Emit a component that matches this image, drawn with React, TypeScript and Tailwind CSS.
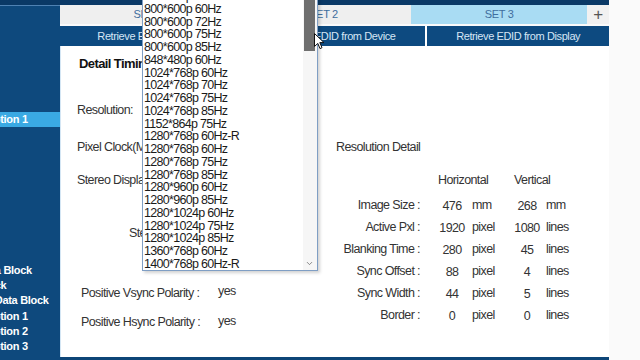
import { ChevronDown } from 'lucide-react'

const modes = [
  '800*600p 56Hz',
  '800*600p 60Hz',
  '800*600p 72Hz',
  '800*600p 75Hz',
  '800*600p 85Hz',
  '848*480p 60Hz',
  '1024*768p 60Hz',
  '1024*768p 70Hz',
  '1024*768p 75Hz',
  '1024*768p 85Hz',
  '1152*864p 75Hz',
  '1280*768p 60Hz-R',
  '1280*768p 60Hz',
  '1280*768p 75Hz',
  '1280*768p 85Hz',
  '1280*960p 60Hz',
  '1280*960p 85Hz',
  '1280*1024p 60Hz',
  '1280*1024p 75Hz',
  '1280*1024p 85Hz',
  '1360*768p 60Hz',
  '1400*768p 60Hz-R',
]

// sidebar is scrolled sideways, so only the tail of long names shows
const navItems = [
  'EDID Header',
  'Vendor/Product ID',
  'EDID Version',
  'Basic Parameters',
  'Color Characteristics',
  'Established Timings',
  'Standard Timings',
  'Detailed Timing Description 1',
  'Monitor Name',
  'Monitor Range Limits',
  'Serial Number',
  'CEA-861 Extension',
  'General Info',
  'Video Data Block',
  'Audio Data Block',
  'Vendor Block',
  'HDR Static Block',
  'Speaker Allocation Data Block',
  'Extended Tag Data Block',
  'Vendor Specific Audio Data Block',
  'Detailed Timing Description 1',
  'Detailed Timing Description 2',
  'Detailed Timing Description 3',
]

const detailRows = [
  { label: 'Image Size :', h: '476', hu: 'mm', v: '268', vu: 'mm' },
  { label: 'Active Pxl :', h: '1920', hu: 'pixel', v: '1080', vu: 'lines' },
  { label: 'Blanking Time :', h: '280', hu: 'pixel', v: '45', vu: 'lines' },
  { label: 'Sync Offset :', h: '88', hu: 'pixel', v: '4', vu: 'lines' },
  { label: 'Sync Width :', h: '44', hu: 'pixel', v: '5', vu: 'lines' },
  { label: 'Border :', h: '0', hu: 'pixel', v: '0', vu: 'lines' },
]

function Sidebar() {
  return (
    <div className="w-[60px] h-full flex flex-col bg-[#0e497d] overflow-hidden">
      <div className="h-[5px] bg-[#0a3966] shrink-0" />
      <div className="h-px bg-[#4f82b3] shrink-0" />
      <div className="-ml-[118px] text-[11px] font-bold tracking-[-0.3px] text-white">
        {navItems.map((name, i) => (
          <div
            key={i}
            className={`h-[15.13px] leading-[15.13px] whitespace-nowrap ${i === 7 ? 'bg-[#3aa9e3]' : ''}`}
          >
            {name}
          </div>
        ))}
      </div>
    </div>
  )
}

function ModeList() {
  return (
    <div className="absolute left-[142px] top-[-11px] w-[176px] h-[282px] bg-white border border-[#7f9ec4] shadow-[2px_2px_3px_rgba(0,0,0,0.18)] flex">
      <div className="flex-1 h-[280px] overflow-hidden text-[12.5px] tracking-[-0.7px] text-[#1a1a1a]">
        {modes.map((m) => (
          <div key={m} className="h-[12.75px] leading-[12.75px] pl-px whitespace-nowrap">{m}</div>
        ))}
      </div>
      <div className="w-[14px] h-full bg-[#f6f6f6] flex flex-col items-center pr-[2px]">
        <div className="w-[11px] h-[61px] bg-[#6f6f6f]" />
        <div className="flex-1" />
        <ChevronDown size={9} strokeWidth={2} className="text-[#666] mb-[2px]" />
      </div>
    </div>
  )
}

function Cursor() {
  return (
    <svg className="absolute left-[314px] top-[33px]" width="11" height="17" viewBox="0 0 11 17">
      <path d="M0.5 0.5 L0.5 13.5 L3.8 10.4 L6 15.6 L8 14.7 L5.8 9.6 L10 9.6 Z" fill="#fff" stroke="#111" strokeWidth="1" />
    </svg>
  )
}

function Main() {
  return (
    <div className="w-[549px] h-full flex flex-col">
      <div className="h-[5px] bg-[#0a3966] shrink-0" />
      <div className="h-[19px] flex text-[11px] tracking-[-0.3px] text-[#3f6e9e] shrink-0">
        <div className="flex-1 bg-[#efefef] flex items-center justify-center">SET 1</div>
        <div className="flex-1 bg-[#efefef] flex items-center justify-center">SET 2</div>
        <div className="flex-1 bg-[#a9dcf3] flex items-center justify-center">SET 3</div>
        <div className="w-[22px] bg-[#f1f1f1] flex items-center justify-center text-[17px] font-light text-[#555]">+</div>
      </div>
      <div className="h-[20px] mt-[2px] flex gap-[2px] bg-white text-[11px] tracking-[-0.4px] text-[#d6e6f5] shrink-0">
        <div className="flex-1 bg-[#0d4a80] flex items-center justify-center">Retrieve EDID from File</div>
        <div className="flex-1 bg-[#0d4a80] flex items-center justify-center">Retrieve EDID from Device</div>
        <div className="flex-1 bg-[#0d4a80] flex items-center justify-center">Retrieve EDID from Display</div>
      </div>
      <div className="flex-1 flex bg-white border-l border-[#d4e6f4] text-[12.5px] tracking-[-0.6px] text-[#333]">
        <div className="w-[275px] pl-[16px] flex flex-col">
          <div className="h-[36px] pl-[2px] flex items-center text-[13px] font-bold text-[#111]">Detail Timing Descriptor</div>
          <div className="h-[28px] mt-[14px] flex items-center">Resolution:</div>
          <div className="h-[28px] mt-[9px] flex items-center">Pixel Clock(MHz) :</div>
          <div className="h-[28px] mt-[5px] flex items-center">Stereo Display :</div>
          <div className="h-[28px] mt-[25px] pl-[52px] flex items-center">Stereo Mode :</div>
          <div className="h-[28px] mt-[32px] pl-[4px] flex items-center">
            <span className="w-[137px]">Positive Vsync Polarity :</span>
            <span className="-mt-[3px]">yes</span>
          </div>
          <div className="h-[28px] mt-[1px] pl-[4px] flex items-center">
            <span className="w-[137px]">Positive Hsync Polarity :</span>
            <span className="-mt-[2px]">yes</span>
          </div>
        </div>
        <div className="flex-1 pt-[92px] flex flex-col">
          <div className="h-[18px] flex items-center">Resolution Detail</div>
          <div className="h-[18px] mt-[15px] pl-[102px] flex items-center">
            <span className="w-[76px]">Horizontal</span>
            <span>Vertical</span>
          </div>
          <div className="mt-[5px] flex flex-col">
            {detailRows.map((r) => (
              <div key={r.label} className="h-[22px] grid grid-cols-[96px_40px_36px_38px_auto] items-center">
                <span className="text-right pr-[12px] whitespace-nowrap">{r.label}</span>
                <span className="text-center pt-[2px]">{r.h}</span>
                <span>{r.hu}</span>
                <span className="text-center pt-[2px]">{r.v}</span>
                <span>{r.vu}</span>
              </div>
            ))}
          </div>
        </div>
      </div>
      <div className="h-[3px] bg-[#0d4577] shrink-0" />
    </div>
  )
}

export default function App() {
  return (
    <div className="relative w-[640px] h-[360px] overflow-hidden flex bg-[#fafafa] font-['Liberation_Sans',Arial,sans-serif]">
      <Sidebar />
      <Main />
      <div className="flex-1 bg-[#fafafa]" />
      <ModeList />
      <Cursor />
    </div>
  )
}
